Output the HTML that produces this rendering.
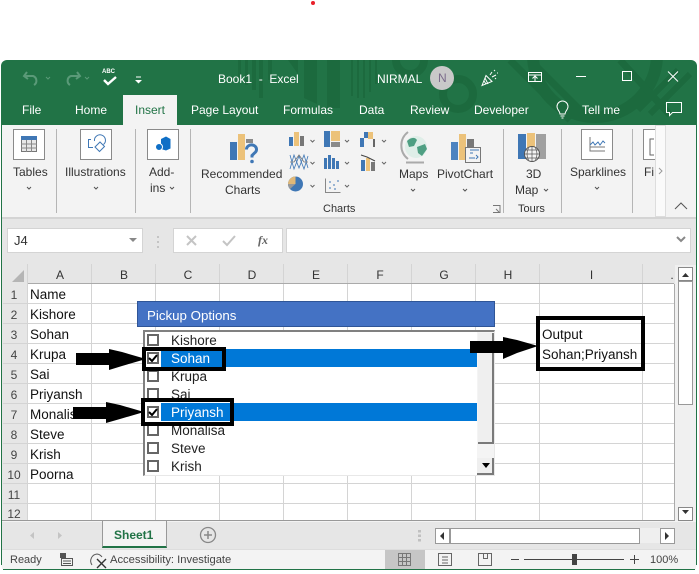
<!DOCTYPE html>
<html><head><meta charset="utf-8">
<style>
html,body{margin:0;padding:0;background:#fff}
#p{position:relative;width:699px;height:574px;overflow:hidden;background:#fff;font-family:"Liberation Sans",sans-serif}
#p div,#p span.a{position:absolute}
.t{white-space:nowrap;color:#333;font-size:12px;line-height:14px}
.c{white-space:nowrap;color:#111;font-size:13.5px;line-height:16px}
.tab{white-space:nowrap;color:#fff;font-size:12px;line-height:14px;top:103px}
.hd{color:#333;font-size:12px;line-height:14px;text-align:center;top:268px}
.rn{color:#444;font-size:12px;line-height:14px;left:2px;width:24px;text-align:center}
.li{color:#222;font-size:13.5px;line-height:16px;left:171px;white-space:nowrap}
.cb{left:147px;width:8px;height:8px;border:2px solid #666;background:#fff}
.box{border:4px solid #000;box-sizing:border-box}
</style></head><body>
<div id="p">
<div style="left:311px;top:1px;width:4px;height:4px;border-radius:2px;background:#e8202a"></div>

<!-- window -->
<div style="left:1px;top:60px;width:696px;height:510px;background:#f3f3f3;border-radius:6px;overflow:hidden"></div>
<div style="left:1px;top:60px;width:696px;height:65px;background:#217346;border-radius:6px 6px 0 0;overflow:hidden"></div>
<svg style="position:absolute;left:0;top:60px" width="699" height="65">
<g fill="#1c6a3e">
<rect x="238" y="0" width="3" height="20"/><rect x="245" y="0" width="3" height="25"/><rect x="252" y="0" width="4" height="30"/><rect x="259" y="0" width="4" height="38"/><rect x="268" y="0" width="4" height="20"/>
<path d="M288 0h10v14zM304 0h13v44l-13-6zM327 0h13v48h-13z"/>
</g>
<g fill="none" stroke="#1c6a3e">
<circle cx="458" cy="34" r="15" stroke-width="8"/>
<circle cx="410" cy="0" r="14" stroke-width="8"/>
<circle cx="595" cy="-5" r="62" stroke-width="12"/>
<path d="M510 0l60 60M530 0l60 60M620 0l50 55" stroke-width="7"/>
<path d="M678 10l-40 40M690 14l-40 40" stroke-width="6"/>
</g>
<g fill="none" stroke="#1c6a3e" stroke-width="2"><path d="M352 0v36M358 0v38M364 0v38M370 0v32M376 0v24"/></g>
</svg>
<div style="left:1px;top:70px;width:1px;height:495px;background:#217346"></div>
<div style="left:696px;top:70px;width:1px;height:495px;background:#217346"></div>
<div style="left:3px;top:569px;width:692px;height:1px;background:#217346"></div>

<!-- QAT -->
<svg style="position:absolute;left:20px;top:66px" width="130" height="26" fill="none">
<path d="M7 6l-3 4 4 3M4 10h9a5 5 0 0 1 1 9" stroke="#5a9a78" stroke-width="2"/>
<path d="M26 11l2 2 2-2" stroke="#5a9a78"/>
<path d="M57 6l3 4-4 3M60 10h-9a5 5 0 0 0-1 9" stroke="#5a9a78" stroke-width="2"/>
<path d="M65 11l2 2 2-2" stroke="#5a9a78"/>
<path d="M84 14l4 4 8-7" stroke="#fff" stroke-width="2.4"/>
<path d="M116 11h5" stroke="#fff"/><path d="M115 14h7l-3.500 3.500z" fill="#fff"/>
</svg>
<div class="t" style="left:102px;top:68px;font-size:6px;font-weight:bold;color:#fff;line-height:8px">ABC</div>
<div class="tab" style="left:218px;top:72px">Book1&nbsp; -&nbsp; Excel</div>
<div class="tab" style="left:377px;top:72px">NIRMAL</div>
<div style="left:430px;top:66px;width:24px;height:24px;border-radius:12px;background:#c9c9c9"></div>
<div class="t" style="left:438px;top:71px;color:#7b6b8b">N</div>
<svg style="position:absolute;left:478px;top:68px" width="22" height="22" fill="none" stroke="#fff">
<path d="M4 17.500l4-10 6 6zM7 10l3 6M6 13l2 3M12 7l2-3M14 9l4-2M16 3l1-1M19 5l1 0M17 10l1 1"/>
</svg>
<svg style="position:absolute;left:525px;top:68px" width="170" height="20" fill="none" stroke="#fff">
<path d="M3.500 4.500h13v9h-13zM3.500 7h13M10 13V8.500M7.500 10.500L10 8l2.500 2.500"/>
<path d="M51 8.500h10"/>
<rect x="97.500" y="3.500" width="9" height="9"/>
<path d="M143 3.500l10 10M153 3.500l-10 10"/>
</svg>

<!-- Tabs -->
<div style="left:123px;top:95px;width:54px;height:30px;background:#f3f3f3"></div>
<div class="tab" style="left:22px">File</div>
<div class="tab" style="left:75px">Home</div>
<div class="tab" style="left:135px;color:#217346">Insert</div>
<div class="tab" style="left:191px">Page Layout</div>
<div class="tab" style="left:283px">Formulas</div>
<div class="tab" style="left:359px">Data</div>
<div class="tab" style="left:410px">Review</div>
<div class="tab" style="left:474px">Developer</div>
<div class="tab" style="left:582px">Tell me</div>
<svg style="position:absolute;left:553px;top:100px" width="140" height="22" fill="none" stroke="#fff">
<path d="M7 14c0-3-3-4-3-7.500a5.500 5.500 0 0 1 11 0c0 3.500-3 4.500-3 7.500zM7.500 16h4M8.500 18h2"/>
<path d="M113.500 2.500h15v10h-9l-3 3v-3h-3z"/>
</svg>

<!-- Ribbon -->
<div style="left:2px;top:125px;width:694px;height:92px;background:#f3f3f3"></div>
<div style="left:2px;top:217px;width:694px;height:2px;background:#d4d4d4"></div>
<div style="left:2px;top:219px;width:694px;height:46px;background:#e6e6e6"></div>
<div style="left:56px;top:129px;width:1px;height:84px;background:#b5b5b5"></div>
<div style="left:135px;top:129px;width:1px;height:84px;background:#b5b5b5"></div>
<div style="left:190px;top:129px;width:1px;height:84px;background:#b5b5b5"></div>
<div style="left:503px;top:129px;width:1px;height:84px;background:#b5b5b5"></div>
<div style="left:561px;top:129px;width:1px;height:84px;background:#b5b5b5"></div>
<div style="left:632px;top:129px;width:1px;height:84px;background:#b5b5b5"></div>

<svg style="position:absolute;left:0;top:125px" width="699" height="92" fill="none">
<!-- tables -->
<rect x="13.500" y="4.500" width="31" height="30" fill="#fff" stroke="#8a8a8a"/>
<rect x="21.500" y="11.500" width="15" height="15" fill="#e8e8e8" stroke="#777"/>
<rect x="21" y="11" width="16" height="4" fill="#3f77b5"/>
<path d="M21 19h16M21 23h16M26.500 15v12M31.500 15v12" stroke="#888"/>
<!-- illustrations -->
<rect x="80.500" y="4.500" width="31" height="30" fill="#fff" stroke="#8a8a8a"/>
<path d="M91 14.500h-2.500v8h4.500M95 22l5-5 4.500 4.500-5 5z" stroke="#3f77b5"/>
<path d="M94.500 16a5.500 5.500 0 1 1 9 3.500" stroke="#3f77b5"/>
<!-- addins -->
<rect x="147.500" y="4.500" width="31" height="30" fill="#fff" stroke="#8a8a8a"/>
<path d="M161 14l5-2.500 4.500 2.500v9.500l-4.500 2-5-1.500z" fill="#0f6fc6"/><circle cx="159" cy="22" r="3.500" fill="#0f6fc6" stroke="#fff"/>
<!-- recommended -->
<rect x="230" y="17" width="7" height="18" fill="#3f77b5"/>
<rect x="238" y="9" width="7" height="26" fill="#ecc27a"/>
<rect x="246" y="14" width="7" height="4" fill="#8a8a8a"/>
<path d="M246.500 24.500a5 4.500 0 1 1 8 3.500l-2.500 2.500v2" stroke="#3f77b5" stroke-width="3"/>
<circle cx="252" cy="36.500" r="1.800" fill="#3f77b5"/>
<!-- small charts -->
<rect x="289" y="12" width="4" height="9" fill="#3f77b5"/><rect x="294" y="7" width="5" height="14" fill="#ecc27a"/><rect x="300" y="11" width="4" height="10" fill="#777"/>
<path d="M290 30l4 14 5-13 5 13 4-13M290 44l4-14 5 13 5-13 4 13" stroke="#3f77b5" stroke-width=".8"/><path d="M290 37h4l5-7 5 7h4" stroke="#777" stroke-width=".8"/>
<circle cx="295.500" cy="59" r="7.500" fill="#3f77b5"/><path d="M295.500 51.500a7.500 7.500 0 0 0-7.500 7.500h7.500z" fill="#e0b878"/><path d="M288 59a7.500 7.500 0 0 0 2 5l5.500-5z" fill="#999"/>
<path d="M310.500 15l2 2 2-2M310.500 37l2 2 2-2M310.500 60l2 2 2-2M345 15l2 2 2-2M345 37l2 2 2-2M345 60l2 2 2-2" stroke="#666"/>
<rect x="324" y="6" width="6" height="16" fill="#3f77b5"/><rect x="331" y="6" width="9" height="10" fill="#ecc27a"/><rect x="331" y="17" width="9" height="5" fill="#8a8a8a"/>
<rect x="324" y="33" width="3" height="11" fill="#3f77b5"/><rect x="328" y="30" width="3" height="14" fill="#3f77b5"/><rect x="332" y="33" width="3" height="11" fill="#3f77b5"/><rect x="336" y="36" width="3" height="8" fill="#3f77b5"/>
<path d="M325.500 53.500v14h15" stroke="#888"/><path d="M329 57h2M333 60h2M337 56h2M329 63h2M334 64h2" stroke="#3f77b5"/>
<rect x="360" y="13" width="4" height="9" fill="#3f77b5"/><rect x="364" y="7" width="4" height="6" fill="#3f77b5"/><rect x="368" y="7" width="5" height="7" fill="#ecc27a"/><rect x="373" y="14" width="2" height="8" fill="#666"/>
<rect x="361" y="35" width="4" height="11" fill="#3f77b5"/><rect x="366" y="33" width="4" height="13" fill="#ecc27a"/><rect x="371" y="37" width="4" height="9" fill="#777"/>
<path d="M361 30l6 2 8 4" stroke="#444"/>
<path d="M382 15l2 2 2-2M382 37l2 2 2-2" stroke="#666"/>
<!-- globe -->
<circle cx="416" cy="22" r="11" fill="#dfeee8"/>
<path d="M407 16c4-4 8-4 10-1l-3 6-5 1zM417 22l8-3 2 5-5 7-4-3z" fill="#4f9f83"/>
<path d="M408 7a17 17 0 0 0 0 27M406 37.500h18" stroke="#aaa" stroke-width="2"/>
<!-- pivot chart -->
<rect x="451" y="17" width="7" height="18" fill="#4c83c0"/><rect x="459" y="9" width="7" height="26" fill="#ecc27a"/><rect x="467" y="14" width="7" height="8" fill="#777"/>
<rect x="465.500" y="22.500" width="15" height="15" fill="#f3f3f3" stroke="#777"/><path d="M470 25h9M470 28h3M469 33h6M476 30l2 2-2 2" stroke="#3f77b5"/>
<!-- 3d map -->
<rect x="518" y="9" width="8" height="25" fill="#3f77b5"/><rect x="527" y="8" width="8" height="26" fill="#ecc27a"/><rect x="536" y="9" width="10" height="25" fill="#a0a0a0"/>
<circle cx="532" cy="29" r="7.500" fill="#f3f3f3" stroke="#555"/><path d="M525 29h15M532 22v15M528.500 23c-2 4-2 8 0 12M535.500 23c2 4 2 8 0 12M526 25h12M526 33h12" stroke="#555" stroke-width=".7"/>
<!-- sparklines -->
<rect x="581.500" y="4.500" width="31" height="30" fill="#fff" stroke="#8a8a8a"/>
<path d="M590 12v14h15M590 22h15" stroke="#777"/><path d="M590 20l3-3 2 3 3-3 2 3 3-4 2 2" stroke="#3f77b5"/>
<!-- filters -->
<path d="M655 4.500h-11.500v30H655" fill="#fff" stroke="#8a8a8a"/><path d="M654 14h-4v16h4" stroke="#666"/>
<!-- dropdown chevrons -->
<path d="M27 62l2 2 2-2M94 62l2 2 2-2M170 62l2 2 2-2M411 64l2 2 2-2M463 64l2 2 2-2M595 62l2 2 2-2M544 64l2 2 2-2" stroke="#555"/>
<path d="M493 80.500h7v7h-7M496 84l3 3" stroke="#777"/>
<path d="M675 84l6-6 6 6" stroke="#555"/>
</svg>
<div style="left:655px;top:125px;width:11px;height:92px;background:#fafafa;border:1px solid #ddd;box-sizing:border-box"></div>
<svg style="position:absolute;left:655px;top:165px" width="11" height="12"><path d="M4 3l3 3-3 3" fill="none" stroke="#999"/></svg>

<div class="t" style="left:13px;top:165px">Tables</div>
<div class="t" style="left:65px;top:165px">Illustrations</div>
<div class="t" style="left:149px;top:165px">Add-</div>
<div class="t" style="left:150px;top:181px">ins</div>
<div class="t" style="left:201px;top:167px">Recommended</div>
<div class="t" style="left:225px;top:183px">Charts</div>
<div class="t" style="left:399px;top:167px">Maps</div>
<div class="t" style="left:437px;top:167px">PivotChart</div>
<div class="t" style="left:526px;top:167px">3D</div>
<div class="t" style="left:515px;top:183px">Map</div>
<div class="t" style="left:570px;top:165px">Sparklines</div>
<div class="t" style="left:644px;top:165px">Fi</div>
<div class="t" style="left:323px;top:202px;font-size:11px">Charts</div>
<div class="t" style="left:518px;top:202px;font-size:11px">Tours</div>

<!-- formula bar -->
<div style="left:7px;top:228px;width:136px;height:25px;background:#fff;border:1px solid #d4d4d4;box-sizing:border-box"></div>
<div class="t" style="left:14px;top:234px;font-size:13px">J4</div>
<div style="left:173px;top:228px;width:110px;height:25px;background:#fff;border:1px solid #d4d4d4;box-sizing:border-box"></div>
<div style="left:286px;top:228px;width:405px;height:25px;background:#fff;border:1px solid #d4d4d4;box-sizing:border-box"></div>
<svg style="position:absolute;left:120px;top:230px" width="180" height="22" fill="none">
<path d="M9 8h8l-4 4z" fill="#888"/>
<path d="M38 6v2M38 11v2M38 16v2" stroke="#c4c4c4" stroke-width="2"/>
<path d="M67 6l9 9M76 6l-9 9" stroke="#c4c4c4" stroke-width="2"/>
<path d="M103 11l4 4 8-9" stroke="#c4c4c4" stroke-width="2"/>
</svg>
<div class="t" style="left:258px;top:233px;font:italic bold 12px 'Liberation Serif',serif;color:#666">fx</div>
<svg style="position:absolute;left:675px;top:234px" width="14" height="12" fill="none"><path d="M2 3l4 4 4-4" stroke="#888" stroke-width="2"/></svg>

<!-- grid headers -->
<div style="left:2px;top:265px;width:673px;height:19px;background:#e6e6e6"></div>
<div style="left:2px;top:265px;width:26px;height:256px;background:#e6e6e6"></div>
<svg style="position:absolute;left:10px;top:268px" width="16" height="15"><path d="M14 2v12H2z" fill="#b5b5b5"/></svg>
<div style="left:28px;top:284px;width:646px;height:237px;background:#fff"></div>
<svg style="position:absolute;left:0;top:264px" width="699" height="258" fill="none" stroke="#d4d4d4">
<path d="M27.500 0v257M91.500 0v257M155.500 0v257M219.500 0v257M283.500 0v257M347.500 0v257M411.500 0v257M475.500 0v257M539.500 0v257M642.500 0v257"/>
<path d="M3 39.500h671M3 59.500h671M3 79.500h671M3 99.500h671M3 119.500h671M3 139.500h671M3 159.500h671M3 179.500h671M3 199.500h671M3 219.500h671M3 239.500h671"/>
<path d="M28 19.500h646M674.500 20v237" stroke="#aaa"/>
<path d="M2 256.500h673" stroke="#999"/>
</svg>
<div class="hd" style="left:28px;width:64px">A</div>
<div class="hd" style="left:92px;width:64px">B</div>
<div class="hd" style="left:156px;width:64px">C</div>
<div class="hd" style="left:220px;width:64px">D</div>
<div class="hd" style="left:284px;width:64px">E</div>
<div class="hd" style="left:348px;width:64px">F</div>
<div class="hd" style="left:412px;width:64px">G</div>
<div class="hd" style="left:476px;width:64px">H</div>
<div class="hd" style="left:540px;width:103px">I</div>
<div class="hd" style="left:670px;width:4px">.</div>

<div class="rn" style="top:288px">1</div><div class="rn" style="top:308px">2</div><div class="rn" style="top:328px">3</div><div class="rn" style="top:348px">4</div><div class="rn" style="top:368px">5</div><div class="rn" style="top:388px">6</div><div class="rn" style="top:408px">7</div><div class="rn" style="top:428px">8</div><div class="rn" style="top:448px">9</div><div class="rn" style="top:468px">10</div><div class="rn" style="top:488px">11</div><div class="rn" style="top:507px">12</div>

<div class="c" style="left:30px;top:287px">Name</div>
<div class="c" style="left:30px;top:307px">Kishore</div>
<div class="c" style="left:30px;top:327px">Sohan</div>
<div class="c" style="left:30px;top:347px">Krupa</div>
<div class="c" style="left:30px;top:367px">Sai</div>
<div class="c" style="left:30px;top:387px">Priyansh</div>
<div class="c" style="left:30px;top:407px">Monalisa</div>
<div class="c" style="left:30px;top:427px">Steve</div>
<div class="c" style="left:30px;top:447px">Krish</div>
<div class="c" style="left:30px;top:467px">Poorna</div>
<div class="c" style="left:542px;top:327px">Output</div>
<div class="c" style="left:542px;top:347px">Sohan;Priyansh</div>

<!-- userform -->
<div style="left:137px;top:301px;width:358px;height:26px;background:#4472c4;border:1px solid #2f5597;box-sizing:border-box"></div>
<div class="t" style="left:147px;top:309px;color:#fff;font-size:13.300px">Pickup Options</div>
<div style="left:143px;top:330px;width:352px;height:146px;background:#fff;border-left:2px solid #808080;border-top:2px solid #808080;border-right:1px solid #e8e8e8;border-bottom:1px solid #e8e8e8;box-sizing:border-box"></div>
<div style="left:161px;top:349px;width:316px;height:18px;background:#0078d7"></div>
<div style="left:161px;top:403px;width:316px;height:18px;background:#0078d7"></div>
<div class="cb" style="top:334px"></div><div class="cb" style="top:352px"></div><div class="cb" style="top:370px"></div><div class="cb" style="top:388px"></div><div class="cb" style="top:406px"></div><div class="cb" style="top:424px"></div><div class="cb" style="top:442px"></div><div class="cb" style="top:460px"></div>
<svg style="position:absolute;left:148px;top:352px" width="12" height="70" fill="none" stroke="#000" stroke-width="2"><path d="M1 6l3 3 5-6M1 60l3 3 5-6"/></svg>
<div class="li" style="top:333px">Kishore</div>
<div class="li" style="top:351px;color:#fff">Sohan</div>
<div class="li" style="top:369px">Krupa</div>
<div class="li" style="top:387px">Sai</div>
<div class="li" style="top:405px;color:#fff">Priyansh</div>
<div class="li" style="top:423px">Monalisa</div>
<div class="li" style="top:441px">Steve</div>
<div class="li" style="top:459px">Krish</div>
<!-- list scrollbar -->
<div style="left:477px;top:332px;width:17px;height:143px;background:#f4f4f4"></div>
<div style="left:478px;top:333px;width:16px;height:111px;background:#efefef;border-right:2px solid #7a7a7a;border-bottom:2px solid #7a7a7a;box-sizing:border-box"></div>
<div style="left:477px;top:458px;width:17px;height:17px;background:#efefef;border-right:2px solid #7a7a7a;border-bottom:2px solid #7a7a7a;box-sizing:border-box"></div>
<svg style="position:absolute;left:481px;top:463px" width="10" height="6"><path d="M1 0h8L5 5z" fill="#000"/></svg>

<!-- annotations -->
<div class="box" style="left:142px;top:347px;width:84px;height:24px"></div>
<div class="box" style="left:141px;top:398px;width:93px;height:28px"></div>
<div class="box" style="left:536px;top:316px;width:109px;height:55px"></div>
<svg style="position:absolute;left:0;top:330px" width="560" height="100">
<path d="M76 23H109V19L122 22L146 29L122 36L109 40V35H76ZM73 77H106V72L120 75L144 82L120 89L106 93V89H73ZM470 11H503V7L517 10L538 16L517 23L503 29V23H470Z" fill="#000"/>
</svg>

<!-- right scrollbar -->
<div style="left:675px;top:265px;width:21px;height:256px;background:#f0f0f0"></div>
<div style="left:678px;top:267px;width:15px;height:14px;background:#fff;border:1px solid #888;box-sizing:border-box"></div>
<div style="left:678px;top:281px;width:15px;height:124px;background:#fff;border:1px solid #999;box-sizing:border-box"></div>
<div style="left:678px;top:507px;width:15px;height:14px;background:#fff;border:1px solid #888;box-sizing:border-box"></div>
<svg style="position:absolute;left:680px;top:270px" width="12" height="246"><path d="M2 7h7L5.500 3zM2 240h7l-3.500 4z" fill="#333"/></svg>

<!-- sheet tabs -->
<div style="left:2px;top:522px;width:694px;height:27px;background:#e6e6e6"></div>
<div style="left:102px;top:521px;width:65px;height:27px;background:#f3f3f3;border-left:1px solid #999;border-right:1px solid #999;border-bottom:2px solid #217346;box-sizing:border-box"></div>
<div class="t" style="left:114px;top:528px;color:#217346;font-weight:bold">Sheet1</div>
<svg style="position:absolute;left:20px;top:524px" width="200" height="22" fill="none">
<path d="M14 8l-4 3.500 4 3.500zM38 8l4 3.500-4 3.500z" fill="#c4c4c4"/>
<circle cx="188" cy="11" r="7.500" stroke="#888" stroke-width="1.300"/><path d="M184 11h8M188 7v8" stroke="#888" stroke-width="1.500"/>
</svg>
<svg style="position:absolute;left:418px;top:530px" width="4" height="12"><path d="M0 0h3v2.500H0zM0 4.500h3v2.500H0zM0 9h3v2.500H0z" fill="#c0c0c0"/></svg>
<div style="left:435px;top:528px;width:15px;height:16px;background:#fff;border:1px solid #999;box-sizing:border-box"></div>
<div style="left:450px;top:528px;width:190px;height:16px;background:#fff;border:1px solid #999;box-sizing:border-box"></div>
<div style="left:640px;top:528px;width:20px;height:15px;background:#efefef"></div>
<div style="left:660px;top:528px;width:15px;height:16px;background:#fff;border:1px solid #999;box-sizing:border-box"></div>
<svg style="position:absolute;left:435px;top:528px" width="240" height="16"><path d="M9 4v8L5 8zM230 4v8l4-4z" fill="#333"/></svg>

<!-- status bar -->
<div style="left:2px;top:549px;width:694px;height:20px;background:#f3f3f3;border-top:1px solid #ddd;box-sizing:border-box"></div>
<div style="left:385px;top:550px;width:40px;height:19px;background:#c6c6c6"></div>
<div class="t" style="left:10px;top:553px;color:#444;font-size:11px">Ready</div>
<div class="t" style="left:110px;top:553px;color:#444;font-size:11.200px">Accessibility: Investigate</div>
<div class="t" style="left:650px;top:553px;color:#444;font-size:11px">100%</div>
<svg style="position:absolute;left:0;top:549px" width="699" height="21" fill="none" stroke="#666">
<rect x="60" y="4" width="6" height="5" fill="#555" stroke="none"/>
<path d="M61.500 9.500h11v7h-11zM63 12h8M63 14.500h8" stroke="#555"/>
<path d="M97 5a7 7 0 0 0-5 11M97 5a7 7 0 0 1 5 3" stroke="#555"/><path d="M97 10l9 9M106 10l-9 9" stroke="#333" stroke-width="1.400"/>
<path d="M398.500 4.500h12v12h-12zM402.500 4.500v12M406.500 4.500v12M398.500 8.500h12M398.500 12.500h12" stroke="#777"/>
<path d="M438.500 4.500h13v12h-13zM442 8h6M442 11h6M442 14h6"/>
<path d="M478.500 4.500h13v12h-13zM483.500 4.500v5h4v-5"/>
<path d="M511 10.500h8M524 10.500h100M630 10.500h9M634.500 6v9" stroke="#444"/>
<rect x="572" y="5" width="5" height="11" fill="#444" stroke="none"/>
</svg>
</div>
</body></html>
